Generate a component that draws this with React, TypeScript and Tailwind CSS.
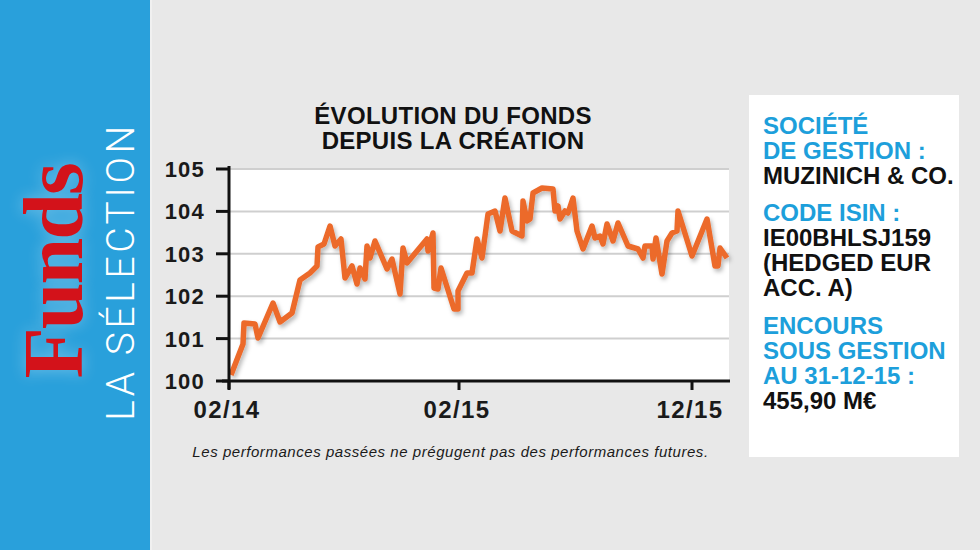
const points: [number, number][] = [
  [231, 374], [243, 343], [244, 322], [255, 323], [258, 337], [273, 302], [280, 321], [292, 312],
  [300, 279], [310, 272], [317, 265], [318, 246], [324, 243], [330, 225], [335, 245], [341, 238],
  [345, 277], [352, 265], [357, 283], [360, 267], [365, 278], [367, 245], [370, 257], [375, 240],
  [387, 268], [392, 258], [400, 293], [403, 247], [407, 262], [427, 238], [428, 250], [433, 232],
  [434, 287], [438, 288], [441, 267], [454, 308], [458, 308], [458, 290], [467, 272], [472, 272],
  [477, 238], [482, 257], [488, 213], [495, 210], [500, 230], [505, 197], [512, 230], [522, 235],
  [523, 200], [527, 220], [530, 218], [533, 192], [542, 187], [553, 188], [555, 210], [558, 205],
  [560, 218], [565, 210], [568, 212], [573, 197], [577, 230], [583, 248], [592, 225], [595, 237],
  [600, 235], [603, 243], [607, 223], [613, 240], [618, 222], [628, 245], [638, 248], [643, 257],
  [645, 245], [652, 245], [653, 258], [656, 237], [662, 273], [667, 240], [672, 232], [677, 230],
  [678, 210], [692, 255], [707, 218], [715, 265], [718, 265], [720, 247], [727, 257],
];

const yLabels = [105, 104, 103, 102, 101, 100];
const xTicks = [
  { x: 229, label: "02/14" },
  { x: 459, label: "02/15" },
  { x: 692, label: "12/15" },
];

function yOf(v: number) {
  return 380 - (v - 100) * 42.4;
}

function Chart() {
  const path = points.map(([x, y], i) => `${i ? "L" : "M"}${x} ${y}`).join(" ");
  return (
    <svg width={597} height={280} viewBox="152 152 597 280" className="block">
      <defs>
        <filter id="shadow" x="-5%" y="-10%" width="110%" height="130%">
          <feDropShadow dx="2" dy="3" stdDeviation="2" floodColor="#000" floodOpacity="0.28" />
        </filter>
      </defs>
      <rect x={230} y={168} width={499} height={212} fill="#fff" />
      {yLabels.slice(0, 5).map((v) => (
        <line key={v} x1={230} x2={729} y1={yOf(v)} y2={yOf(v)} stroke="#cfcfcf" strokeWidth={2} />
      ))}
      <path d={path} fill="none" stroke="#ec6a2c" strokeWidth={5.5} strokeLinejoin="round" filter="url(#shadow)" />
      {/* axes */}
      <line x1={229} x2={229} y1={165} y2={388} stroke="#111" strokeWidth={3} />
      <line x1={222} x2={730} y1={380} y2={380} stroke="#111" strokeWidth={3} />
      {yLabels.map((v) => (
        <g key={v}>
          <line x1={216} x2={230} y1={yOf(v)} y2={yOf(v)} stroke="#111" strokeWidth={3} />
          <text
            x={205}
            y={yOf(v) + 8}
            textAnchor="end"
            fontFamily="'Liberation Sans', Arial, sans-serif"
            fontWeight="bold"
            fontSize={22}
            letterSpacing={1.2}
            fill="#1a1a1a"
          >
            {v}
          </text>
        </g>
      ))}
      {xTicks.map((t) => (
        <g key={t.label}>
          <line x1={t.x} x2={t.x} y1={380} y2={389} stroke="#111" strokeWidth={3} />
          <text
            x={t.x - 2}
            y={417}
            textAnchor="middle"
            fontFamily="'Liberation Sans', Arial, sans-serif"
            fontWeight="bold"
            fontSize={24}
            letterSpacing={1.4}
            fill="#1a1a1a"
          >
            {t.label}
          </text>
        </g>
      ))}
    </svg>
  );
}

export default function App() {
  return (
    <div className="w-[980px] h-[550px] flex bg-[#e8e8e8] overflow-hidden font-['Liberation_Sans',Arial,sans-serif]">
      {/* Sidebar */}
      <div className="w-[152px] h-full bg-[#29a0db] border-r-2 border-[#f0f0f0] flex items-center justify-center pl-[12px] pb-[8px] shrink-0">
        <div className="-rotate-90 flex flex-col items-center whitespace-nowrap">
          <div className="font-['Liberation_Serif',serif] font-bold text-[84px] leading-[64px] tracking-[-2px] text-[#d3121a] [text-shadow:0_0_16px_rgba(255,255,255,0.35)]">
            Funds
          </div>
          <div className="mt-[15px] font-['Roboto',sans-serif] font-light text-[39px] leading-[40px] tracking-[3.6px] text-white">
            LA SÉLECTION
          </div>
        </div>
      </div>

      {/* Chart column */}
      <div className="w-[597px] flex flex-col items-center shrink-0">
        <div className="pt-[103px] pl-[5px] text-center font-bold text-[24px] leading-[25px] tracking-[0.3px] text-[#111]">
          <div>ÉVOLUTION DU FONDS</div>
          <div>DEPUIS LA CRÉATION</div>
        </div>
        <Chart />
        <div className="mt-[10px] italic text-[15px] leading-[18px] tracking-[0.55px] text-[#1a1a1a]">
          Les performances passées ne prégugent pas des performances futures.
        </div>
      </div>

      {/* Info panel */}
      <div className="mt-[95px] w-[210px] h-[362px] bg-white pl-[14px] pt-[18px] font-bold text-[24px] leading-[25px] shrink-0">
        <div className="text-[#1d9fdb]">
          SOCIÉTÉ
          <br />
          DE GESTION :
        </div>
        <div className="text-[#111]">MUZINICH &amp; CO.</div>
        <div className="mt-[12px] text-[#1d9fdb]">CODE ISIN :</div>
        <div className="text-[#111]">
          IE00BHLSJ159
          <br />
          (HEDGED EUR
          <br />
          ACC. A)
        </div>
        <div className="mt-[13px] text-[#1d9fdb]">
          ENCOURS
          <br />
          SOUS GESTION
          <br />
          AU 31-12-15 :
        </div>
        <div className="text-[#111]">455,90 M€</div>
      </div>
    </div>
  );
}
